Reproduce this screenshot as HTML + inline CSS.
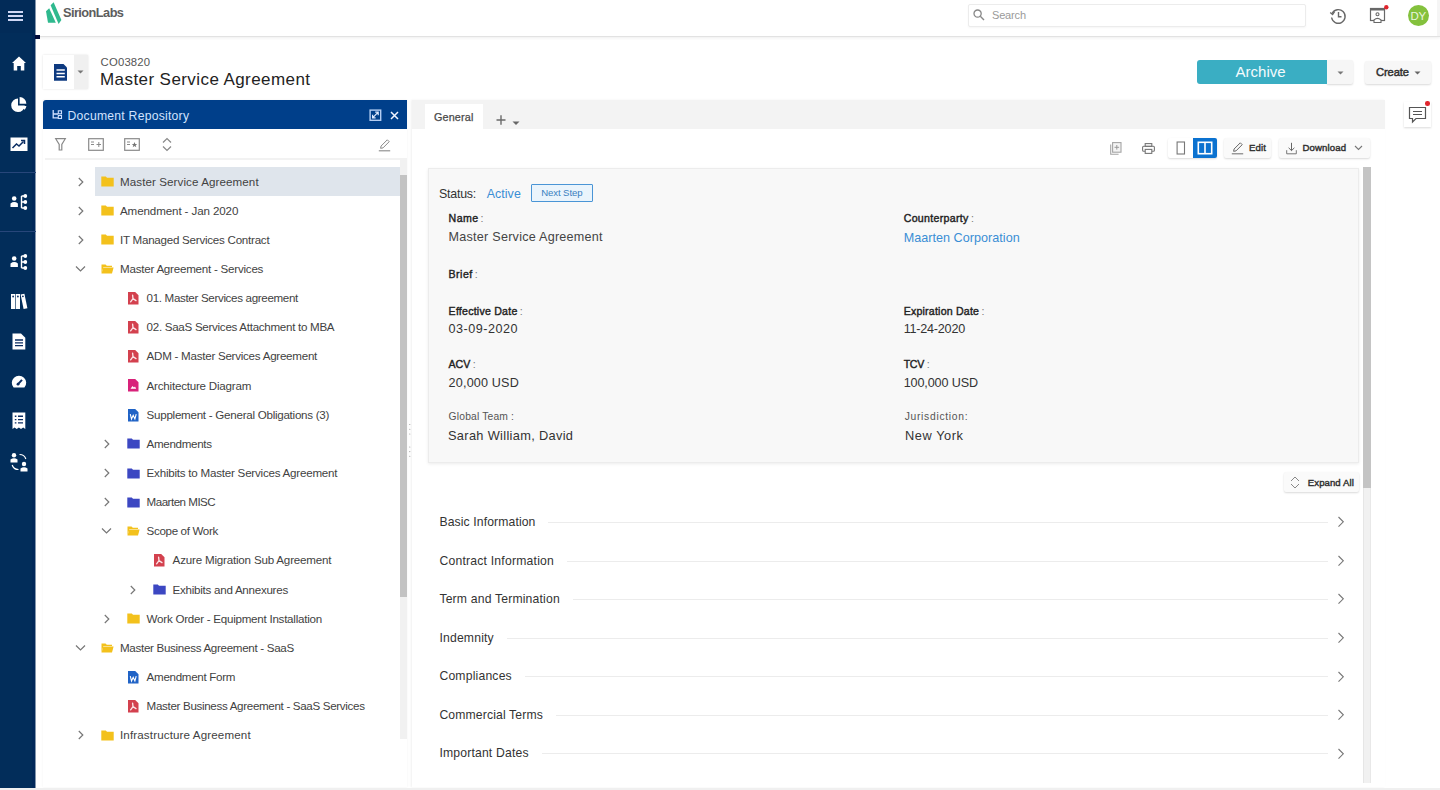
<!DOCTYPE html>
<html><head><meta charset="utf-8"><style>
html,body{margin:0;padding:0;width:1440px;height:790px;overflow:hidden;background:#fff;font-family:"Liberation Sans", sans-serif;}
.t{position:absolute;white-space:nowrap;line-height:1;}
svg{overflow:visible}
</style></head><body>
<div style="position:absolute;left:36px;top:0px;width:1404px;height:36px;background:#fff;border-bottom:1px solid #e2e2e2;box-shadow:0 1px 3px rgba(0,0,0,.07)"></div>
<svg style="position:absolute;left:44px;top:1px" width="20" height="25" viewBox="0 0 20 25"><path d="M2 10.2 L5.2 7.2 L11.8 21.8 L4 21.8 Z" fill="#2fb98e"/><path d="M6.6 4.2 L9.6 1.2 L17.4 19 L14.6 23 Z" fill="#2fb98e"/></svg>
<div class="t" style="left:63.0px;top:6.66px;font-size:12.8px;color:#5d5d5d;font-weight:700;letter-spacing:-0.571px;">SirionLabs</div>
<div style="position:absolute;left:968px;top:4px;width:336px;height:21px;background:#fff;border:1px solid #ececec;border-radius:2px;box-shadow:0 1px 2px rgba(0,0,0,.04)"></div>
<svg style="position:absolute;left:973px;top:9px" width="12" height="12" viewBox="0 0 12 12"><circle cx="4.6" cy="4.6" r="3.6" fill="none" stroke="#888" stroke-width="1.3"/><path d="M7.3 7.3 L11 11" stroke="#888" stroke-width="1.4"/></svg>
<div class="t" style="left:992.0px;top:9.69px;font-size:11px;color:#9a9a9a;font-weight:400;letter-spacing:-0.172px;">Search</div>
<svg style="position:absolute;left:1329px;top:7px" width="18" height="18" viewBox="0 0 18 18"><path d="M3.2 6.5 A6.8 6.8 0 1 1 2.6 10.5" fill="none" stroke="#686868" stroke-width="1.4"/><path d="M1.2 5.5 L3.6 7.6 L5.6 4.6" fill="none" stroke="#686868" stroke-width="1.3"/><path d="M9.5 5 V9.8 H12.5" fill="none" stroke="#686868" stroke-width="1.4"/></svg>
<svg style="position:absolute;left:1368px;top:5px" width="22" height="20" viewBox="0 0 22 20"><rect x="2.5" y="3.5" width="14" height="12" fill="none" stroke="#686868" stroke-width="1.2"/><rect x="2.5" y="3.5" width="14" height="2" fill="#686868"/><circle cx="9.5" cy="9.3" r="1.5" fill="none" stroke="#686868" stroke-width="1.1"/><path d="M6 17.5 V15 Q9.5 11.8 13 15 V17.5 Z" fill="#fff" stroke="#686868" stroke-width="1.1"/><circle cx="18.3" cy="2.3" r="2.2" fill="#e0242c"/></svg>
<div style="position:absolute;left:1437px;top:0px;width:3px;height:36px;background:#f5f5f5"></div>
<div style="position:absolute;left:1407.5px;top:5.3px;width:21px;height:21px;background:#84c13d;border-radius:50%"></div>
<div class="t" style="left:1410.5px;top:10.77px;font-size:11.5px;color:#e9f5dd;font-weight:400;letter-spacing:-0.3px;">DY</div>
<div style="position:absolute;left:0px;top:0px;width:35px;height:790px;background:#022d5a"></div>
<div style="position:absolute;left:32px;top:0px;width:3px;height:790px;background:#01285a"></div>
<div style="position:absolute;left:35px;top:0px;width:1px;height:790px;background:#8496ad"></div>
<div style="position:absolute;left:0px;top:0px;width:35px;height:33px;background:#022b58"></div>
<div style="position:absolute;left:35px;top:35px;width:5px;height:3.5px;background:#030c3a"></div>
<div style="position:absolute;left:8px;top:11px;width:15px;height:2px;background:#cfd7f5;box-shadow:0 4px 0 #cfd7f5,0 8px 0 #cfd7f5"></div>
<div style="position:absolute;left:0px;top:172px;width:36px;height:1px;background:#27467a"></div>
<div style="position:absolute;left:0px;top:231px;width:36px;height:1px;background:#27467a"></div>
<svg style="position:absolute;left:11px;top:55px" width="16" height="17" viewBox="0 0 16 17"><path d="M8 1.5 L15 8 H13.3 V15.5 H9.8 V11 H6.2 V15.5 H2.7 V8 H1 Z" fill="#fff"/></svg>
<svg style="position:absolute;left:10px;top:96px" width="18" height="17" viewBox="0 0 18 17"><path d="M8 2.5 A6.8 6.8 0 1 0 14.8 9.5 H8 Z" fill="#fff"/><path d="M9.6 1 A6.9 6.9 0 0 1 16.4 7.8 H9.6 Z" fill="#fff"/><path d="M10.2 9.9 H16.4 A7 7 0 0 1 14.6 13.8 Z" fill="#fff"/></svg>
<svg style="position:absolute;left:10px;top:137px" width="18" height="15" viewBox="0 0 18 15"><rect x="0.5" y="0.5" width="17" height="13.5" fill="#fff"/><path d="M2.5 11 L6.5 7 L9 9 L13.5 4.5" fill="none" stroke="#0b2d62" stroke-width="1.5"/><path d="M11 3.6 H14.5 V7" fill="none" stroke="#0b2d62" stroke-width="1.5"/></svg>
<svg style="position:absolute;left:10px;top:193px" width="18" height="18" viewBox="0 0 18 18"><circle cx="4.2" cy="5.5" r="2.3" fill="#fff"/><path d="M0.5 14 V10.5 Q4.2 7.6 7.9 10.5 V14 Z" fill="#fff"/><path d="M11.5 3 V15 M11.5 3 H14.5 M11.5 9 H14.5 M11.5 15 H14.5" fill="none" stroke="#fff" stroke-width="1.4"/><circle cx="15.3" cy="3" r="1.9" fill="#fff"/><circle cx="15.3" cy="9" r="1.9" fill="#fff"/><circle cx="15.3" cy="15" r="1.9" fill="#fff"/></svg>
<svg style="position:absolute;left:10px;top:253px" width="18" height="18" viewBox="0 0 18 18"><circle cx="4.2" cy="5.5" r="2.3" fill="#fff"/><path d="M0.5 14 V10.5 Q4.2 7.6 7.9 10.5 V14 Z" fill="#fff"/><path d="M11.5 3 V15 M11.5 3 H14.5 M11.5 9 H14.5 M11.5 15 H14.5" fill="none" stroke="#fff" stroke-width="1.4"/><circle cx="15.3" cy="3" r="1.9" fill="#fff"/><circle cx="15.3" cy="9" r="1.9" fill="#fff"/><circle cx="15.3" cy="15" r="1.9" fill="#fff"/></svg>
<svg style="position:absolute;left:10px;top:293px" width="18" height="17" viewBox="0 0 18 17"><rect x="1" y="1" width="4.2" height="15" fill="#fff"/><rect x="5.8" y="1" width="4.2" height="15" fill="#fff"/><path d="M10.6 1.6 L14.4 0.8 L17.4 15.2 L13.6 16 Z" fill="#fff"/><circle cx="3.1" cy="3.5" r="0.9" fill="#0b2d62"/><circle cx="7.9" cy="3.5" r="0.9" fill="#0b2d62"/><circle cx="12.9" cy="3.3" r="0.9" fill="#0b2d62"/></svg>
<svg style="position:absolute;left:12px;top:333px" width="14" height="17" viewBox="0 0 14 17"><path d="M0.5 0.5 H9 L13.3 4.8 V16.5 H0.5 Z" fill="#fff"/><path d="M3 7 H11 M3 9.8 H11 M3 12.6 H11" stroke="#0b2d62" stroke-width="1.3"/></svg>
<svg style="position:absolute;left:11px;top:374px" width="16" height="15" viewBox="0 0 16 15"><path d="M2.6 13.6 A7.2 7.2 0 1 1 13.4 13.6 Z" fill="#fff"/><path d="M6.8 10.4 L11 5.8" stroke="#0b2d62" stroke-width="2"/><circle cx="7" cy="10.2" r="1.4" fill="#0b2d62"/></svg>
<svg style="position:absolute;left:12px;top:412px" width="14" height="18" viewBox="0 0 14 18"><path d="M0.5 0.5 H13.3 V17 L11.2 15.6 L9 17 L6.9 15.6 L4.7 17 L2.6 15.6 L0.5 17 Z" fill="#fff"/><path d="M2.8 4.3 H4.4 M6 4.3 H11 M2.8 7.6 H4.4 M6 7.6 H11 M2.8 10.9 H4.4 M6 10.9 H11" stroke="#0b2d62" stroke-width="1.4"/></svg>
<svg style="position:absolute;left:10px;top:452px" width="18" height="20" viewBox="0 0 18 20"><circle cx="4" cy="3.2" r="2.2" fill="#fff"/><path d="M0.5 10.5 V7.6 Q4 5 7.5 7.6 V10.5 Z" fill="#fff"/><circle cx="14" cy="12" r="2.2" fill="#fff"/><path d="M10.5 19.5 V16.6 Q14 14 17.5 16.6 V19.5 Z" fill="#fff"/><path d="M9.5 2.5 Q14.5 2.5 15.8 7" fill="none" stroke="#fff" stroke-width="1.2"/><path d="M8.5 17.5 Q3.5 17.5 2.2 13" fill="none" stroke="#fff" stroke-width="1.2"/></svg>
<div style="position:absolute;left:43px;top:55px;width:45px;height:34px;background:#f0f0f0;box-shadow:0 0 2px rgba(0,0,0,.12)"></div>
<div style="position:absolute;left:43px;top:55px;width:31px;height:34px;background:#fff"></div>
<svg style="position:absolute;left:54px;top:64px" width="14" height="17" viewBox="0 0 14 17"><path d="M0 0 H9.5 L13 3.5 V16.8 H0 Z" fill="#0e3a80"/><path d="M2.5 6 H10.8 M2.5 9.4 H10.8 M2.5 12.8 H10.8" stroke="#fff" stroke-width="1.5"/></svg>
<svg style="position:absolute;left:77px;top:70px" width="7" height="4" viewBox="0 0 7 4"><path d="M0.5 0.5 H6.5 L3.5 3.5 Z" fill="#777"/></svg>
<div class="t" style="left:100.6px;top:57.23px;font-size:11.3px;color:#555;font-weight:400;letter-spacing:0.19px;">CO03820</div>
<div class="t" style="left:100.0px;top:71.01px;font-size:17px;color:#222;font-weight:400;letter-spacing:0.421px;">Master Service Agreement</div>
<div style="position:absolute;left:1327px;top:60px;width:26px;height:24px;background:#f6f6f6;box-shadow:0 1px 2px rgba(0,0,0,.15);border-radius:0 2px 2px 0"></div>
<div style="position:absolute;left:1197px;top:60px;width:130px;height:24px;background:#3aaec3;border-radius:3px 0 0 3px"></div>
<div class="t" style="left:1235.6px;top:64.10px;font-size:15px;color:#f4fbfd;font-weight:400;letter-spacing:-0.005px;">Archive</div>
<svg style="position:absolute;left:1337px;top:71px" width="7" height="4" viewBox="0 0 7 4"><path d="M0.5 0.5 H6.5 L3.5 3.5 Z" fill="#777"/></svg>
<div style="position:absolute;left:1364.5px;top:61px;width:66.5px;height:22.5px;background:#f7f7f7;box-shadow:0 1px 2px rgba(0,0,0,.15);border-radius:2px"></div>
<div class="t" style="left:1376.0px;top:66.72px;font-size:11.2px;color:#2e2e2e;font-weight:400;letter-spacing:-0.119px;-webkit-text-stroke:0.45px #2e2e2e">Create</div>
<svg style="position:absolute;left:1414px;top:71px" width="7" height="4" viewBox="0 0 7 4"><path d="M0.5 0.5 H6.5 L3.5 3.5 Z" fill="#666"/></svg>
<div style="position:absolute;left:43px;top:100px;width:364px;height:687px;background:#fff;box-shadow:0 0 2px rgba(0,0,0,.06)"></div>
<div style="position:absolute;left:43px;top:100px;width:364px;height:28.5px;background:#003f8a;border-radius:3px 0 0 0"></div>
<svg style="position:absolute;left:52px;top:109px" width="11" height="11" viewBox="0 0 11 11"><path d="M1.2 1 V8.8 H6 M1.2 5 H6" fill="none" stroke="#cfe0ff" stroke-width="1.3"/><rect x="6.3" y="1.8" width="3.2" height="3" fill="none" stroke="#cfe0ff" stroke-width="1.1"/><rect x="6.3" y="6.5" width="3.2" height="3" fill="none" stroke="#cfe0ff" stroke-width="1.1"/></svg>
<div class="t" style="left:67.5px;top:109.97px;font-size:12.2px;color:#d2e3ff;font-weight:400;letter-spacing:0.24px;">Document Repository</div>
<svg style="position:absolute;left:368.5px;top:109px" width="13" height="13" viewBox="0 0 13 13"><rect x="1.1" y="1.1" width="10.6" height="10.2" fill="none" stroke="#b4cdf2" stroke-width="1.4"/><path d="M3.6 8.8 L9.2 3.2 M6.2 3.2 H9.2 V6.2 M3.6 5.8 V8.8 H6.6" fill="none" stroke="#dfeaff" stroke-width="1.2"/></svg>
<svg style="position:absolute;left:390px;top:111px" width="9" height="9" viewBox="0 0 9 9"><path d="M1 1 L8 8 M8 1 L1 8" stroke="#f0f4ff" stroke-width="1.5"/></svg>
<div style="position:absolute;left:45px;top:158px;width:362px;height:2px;background:#f2f2f2"></div>
<svg style="position:absolute;left:55px;top:138px" width="11" height="13" viewBox="0 0 11 13"><path d="M0.7 0.7 H10.3 L6.8 6.5 V12 H4.2 V6.5 Z" fill="none" stroke="#888" stroke-width="1.2"/></svg>
<svg style="position:absolute;left:88px;top:138px" width="16" height="13" viewBox="0 0 16 13"><rect x="0.7" y="0.7" width="14.6" height="11.6" fill="none" stroke="#8a8a8a" stroke-width="1.2"/><path d="M3 4 H6 M3 6.5 H6 M8.5 6.5 H13 M10.8 4 V9" stroke="#8a8a8a" stroke-width="1"/></svg>
<svg style="position:absolute;left:124px;top:138px" width="16" height="13" viewBox="0 0 16 13"><rect x="0.7" y="0.7" width="14.6" height="11.6" fill="none" stroke="#8a8a8a" stroke-width="1.2"/><path d="M3 4 H6 M3 6.5 H6" stroke="#8a8a8a" stroke-width="1"/><path d="M10.5 4 L11.3 6 L13.2 6 L11.7 7.3 L12.3 9.3 L10.5 8.1 L8.7 9.3 L9.3 7.3 L7.8 6 L9.7 6 Z" fill="#777"/></svg>
<svg style="position:absolute;left:162px;top:137px" width="10" height="15" viewBox="0 0 10 15"><path d="M1 5.5 L5 1.5 L9 5.5 M1 9.5 L5 13.5 L9 9.5" fill="none" stroke="#888" stroke-width="1.2"/></svg>
<svg style="position:absolute;left:377.5px;top:139px" width="13" height="13" viewBox="0 0 13 13"><path d="M2.6 9.3 L3.1 7 L9.3 0.8 L11.2 2.7 L5 8.9 Z" fill="none" stroke="#8a8a8a" stroke-width="1"/><path d="M0.8 11.8 H12.2" stroke="#8a8a8a" stroke-width="1.1"/></svg>
<div style="position:absolute;left:94.5px;top:167px;width:305px;height:29px;background:#dfe5ec"></div>
<svg style="position:absolute;left:77px;top:176.8px" width="8" height="10" viewBox="0 0 8 10"><path d="M1.8 1 L5.8 5 L1.8 9" fill="none" stroke="#777" stroke-width="1.2"/></svg>
<svg style="position:absolute;left:101px;top:176.2px" width="13" height="11" viewBox="0 0 13 11"><path d="M0.3 0.5 H4.8 L6 1.8 H12.7 V10.5 H0.3 Z" fill="#f3c11c"/></svg>
<div class="t" style="left:120.0px;top:175.68px;font-size:11.6px;color:#424242;font-weight:400;letter-spacing:0.087px;">Master Service Agreement</div>
<svg style="position:absolute;left:77px;top:205.93px" width="8" height="10" viewBox="0 0 8 10"><path d="M1.8 1 L5.8 5 L1.8 9" fill="none" stroke="#777" stroke-width="1.2"/></svg>
<svg style="position:absolute;left:101px;top:205.32999999999998px" width="13" height="11" viewBox="0 0 13 11"><path d="M0.3 0.5 H4.8 L6 1.8 H12.7 V10.5 H0.3 Z" fill="#f3c11c"/></svg>
<div class="t" style="left:120.0px;top:204.81px;font-size:11.6px;color:#424242;font-weight:400;letter-spacing:-0.112px;">Amendment - Jan 2020</div>
<svg style="position:absolute;left:77px;top:235.06px" width="8" height="10" viewBox="0 0 8 10"><path d="M1.8 1 L5.8 5 L1.8 9" fill="none" stroke="#777" stroke-width="1.2"/></svg>
<svg style="position:absolute;left:101px;top:234.45999999999998px" width="13" height="11" viewBox="0 0 13 11"><path d="M0.3 0.5 H4.8 L6 1.8 H12.7 V10.5 H0.3 Z" fill="#f3c11c"/></svg>
<div class="t" style="left:120.0px;top:233.94px;font-size:11.6px;color:#424242;font-weight:400;letter-spacing:-0.251px;">IT Managed Services Contract</div>
<svg style="position:absolute;left:75px;top:265.19px" width="11" height="8" viewBox="0 0 11 8"><path d="M1 1.5 L5.5 6 L10 1.5" fill="none" stroke="#777" stroke-width="1.2"/></svg>
<svg style="position:absolute;left:101px;top:263.89px" width="13" height="10" viewBox="0 0 13 10"><path d="M0.5 0.5 H4.5 L5.8 1.8 H11 V3 H2.5 L0.5 9.5 Z" fill="#f3c11c"/><path d="M0.5 9.5 L2.3 3.6 H12.6 L11 9.5 Z" fill="#f3c11c"/></svg>
<div class="t" style="left:120.0px;top:263.07px;font-size:11.6px;color:#424242;font-weight:400;letter-spacing:-0.234px;">Master Agreement - Services</div>
<svg style="position:absolute;left:128px;top:292.02px" width="11" height="13" viewBox="0 0 11 13"><path d="M0 0 H7.2 L10.5 3.3 V12.5 H0 Z" fill="#d3414e"/><path d="M4.6 3.2 L5 6.6 L8 8.6 M5 6.6 L2.6 9.8" fill="none" stroke="#fbe3e6" stroke-width="1.35" stroke-linecap="round"/></svg>
<div class="t" style="left:146.6px;top:292.20px;font-size:11.6px;color:#424242;font-weight:400;letter-spacing:-0.336px;">01. Master Services agreement</div>
<svg style="position:absolute;left:128px;top:321.15px" width="11" height="13" viewBox="0 0 11 13"><path d="M0 0 H7.2 L10.5 3.3 V12.5 H0 Z" fill="#d3414e"/><path d="M4.6 3.2 L5 6.6 L8 8.6 M5 6.6 L2.6 9.8" fill="none" stroke="#fbe3e6" stroke-width="1.35" stroke-linecap="round"/></svg>
<div class="t" style="left:146.6px;top:321.33px;font-size:11.6px;color:#424242;font-weight:400;letter-spacing:-0.29px;">02. SaaS Services Attachment to MBA</div>
<svg style="position:absolute;left:128px;top:350.28px" width="11" height="13" viewBox="0 0 11 13"><path d="M0 0 H7.2 L10.5 3.3 V12.5 H0 Z" fill="#d3414e"/><path d="M4.6 3.2 L5 6.6 L8 8.6 M5 6.6 L2.6 9.8" fill="none" stroke="#fbe3e6" stroke-width="1.35" stroke-linecap="round"/></svg>
<div class="t" style="left:146.6px;top:350.46px;font-size:11.6px;color:#424242;font-weight:400;letter-spacing:-0.259px;">ADM - Master Services Agreement</div>
<svg style="position:absolute;left:128px;top:379.40999999999997px" width="11" height="13" viewBox="0 0 11 13"><path d="M0 0 H7.2 L10.5 3.3 V12.5 H0 Z" fill="#d8227a"/><path d="M2.5 9.8 L4.5 7 L6 8.5 L7 7.5 L8.2 9.8 Z" fill="#fff"/></svg>
<div class="t" style="left:146.6px;top:379.59px;font-size:11.6px;color:#424242;font-weight:400;letter-spacing:-0.221px;">Architecture Diagram</div>
<svg style="position:absolute;left:128px;top:408.53999999999996px" width="11" height="13" viewBox="0 0 11 13"><path d="M0 0 H7.2 L10.5 3.3 V12.5 H0 Z" fill="#2063c6"/><path d="M2.3 5.2 L3.5 10 L5.2 6.3 L6.9 10 L8.2 5.2" fill="none" stroke="#fff" stroke-width="1.1"/></svg>
<div class="t" style="left:146.6px;top:408.72px;font-size:11.6px;color:#424242;font-weight:400;letter-spacing:-0.264px;">Supplement - General Obligations (3)</div>
<svg style="position:absolute;left:103px;top:438.97px" width="8" height="10" viewBox="0 0 8 10"><path d="M1.8 1 L5.8 5 L1.8 9" fill="none" stroke="#777" stroke-width="1.2"/></svg>
<svg style="position:absolute;left:127px;top:438.37px" width="13" height="11" viewBox="0 0 13 11"><path d="M0.3 0.5 H4.8 L6 1.8 H12.7 V10.5 H0.3 Z" fill="#3c47c2"/></svg>
<div class="t" style="left:146.6px;top:437.85px;font-size:11.6px;color:#424242;font-weight:400;letter-spacing:-0.324px;">Amendments</div>
<svg style="position:absolute;left:103px;top:468.1px" width="8" height="10" viewBox="0 0 8 10"><path d="M1.8 1 L5.8 5 L1.8 9" fill="none" stroke="#777" stroke-width="1.2"/></svg>
<svg style="position:absolute;left:127px;top:467.5px" width="13" height="11" viewBox="0 0 13 11"><path d="M0.3 0.5 H4.8 L6 1.8 H12.7 V10.5 H0.3 Z" fill="#3c47c2"/></svg>
<div class="t" style="left:146.6px;top:466.98px;font-size:11.6px;color:#424242;font-weight:400;letter-spacing:-0.228px;">Exhibits to Master Services Agreement</div>
<svg style="position:absolute;left:103px;top:497.23px" width="8" height="10" viewBox="0 0 8 10"><path d="M1.8 1 L5.8 5 L1.8 9" fill="none" stroke="#777" stroke-width="1.2"/></svg>
<svg style="position:absolute;left:127px;top:496.63px" width="13" height="11" viewBox="0 0 13 11"><path d="M0.3 0.5 H4.8 L6 1.8 H12.7 V10.5 H0.3 Z" fill="#3c47c2"/></svg>
<div class="t" style="left:146.6px;top:496.11px;font-size:11.6px;color:#424242;font-weight:400;letter-spacing:-0.514px;">Maarten MISC</div>
<svg style="position:absolute;left:101px;top:527.3599999999999px" width="11" height="8" viewBox="0 0 11 8"><path d="M1 1.5 L5.5 6 L10 1.5" fill="none" stroke="#777" stroke-width="1.2"/></svg>
<svg style="position:absolute;left:127px;top:526.06px" width="13" height="10" viewBox="0 0 13 10"><path d="M0.5 0.5 H4.5 L5.8 1.8 H11 V3 H2.5 L0.5 9.5 Z" fill="#f3c11c"/><path d="M0.5 9.5 L2.3 3.6 H12.6 L11 9.5 Z" fill="#f3c11c"/></svg>
<div class="t" style="left:146.6px;top:525.24px;font-size:11.6px;color:#424242;font-weight:400;letter-spacing:-0.344px;">Scope of Work</div>
<svg style="position:absolute;left:154px;top:554.19px" width="11" height="13" viewBox="0 0 11 13"><path d="M0 0 H7.2 L10.5 3.3 V12.5 H0 Z" fill="#d3414e"/><path d="M4.6 3.2 L5 6.6 L8 8.6 M5 6.6 L2.6 9.8" fill="none" stroke="#fbe3e6" stroke-width="1.35" stroke-linecap="round"/></svg>
<div class="t" style="left:172.6px;top:554.37px;font-size:11.6px;color:#424242;font-weight:400;letter-spacing:-0.194px;">Azure Migration Sub Agreement</div>
<svg style="position:absolute;left:129px;top:584.6199999999999px" width="8" height="10" viewBox="0 0 8 10"><path d="M1.8 1 L5.8 5 L1.8 9" fill="none" stroke="#777" stroke-width="1.2"/></svg>
<svg style="position:absolute;left:153px;top:584.02px" width="13" height="11" viewBox="0 0 13 11"><path d="M0.3 0.5 H4.8 L6 1.8 H12.7 V10.5 H0.3 Z" fill="#3c47c2"/></svg>
<div class="t" style="left:172.6px;top:583.50px;font-size:11.6px;color:#424242;font-weight:400;letter-spacing:-0.265px;">Exhibits and Annexures</div>
<svg style="position:absolute;left:103px;top:613.75px" width="8" height="10" viewBox="0 0 8 10"><path d="M1.8 1 L5.8 5 L1.8 9" fill="none" stroke="#777" stroke-width="1.2"/></svg>
<svg style="position:absolute;left:127px;top:613.1500000000001px" width="13" height="11" viewBox="0 0 13 11"><path d="M0.3 0.5 H4.8 L6 1.8 H12.7 V10.5 H0.3 Z" fill="#f3c11c"/></svg>
<div class="t" style="left:146.6px;top:612.63px;font-size:11.6px;color:#424242;font-weight:400;letter-spacing:-0.252px;">Work Order - Equipment Installation</div>
<svg style="position:absolute;left:75px;top:643.8799999999999px" width="11" height="8" viewBox="0 0 11 8"><path d="M1 1.5 L5.5 6 L10 1.5" fill="none" stroke="#777" stroke-width="1.2"/></svg>
<svg style="position:absolute;left:101px;top:642.5799999999999px" width="13" height="10" viewBox="0 0 13 10"><path d="M0.5 0.5 H4.5 L5.8 1.8 H11 V3 H2.5 L0.5 9.5 Z" fill="#f3c11c"/><path d="M0.5 9.5 L2.3 3.6 H12.6 L11 9.5 Z" fill="#f3c11c"/></svg>
<div class="t" style="left:120.0px;top:641.76px;font-size:11.6px;color:#424242;font-weight:400;letter-spacing:-0.305px;">Master Business Agreement - SaaS</div>
<svg style="position:absolute;left:128px;top:670.71px" width="11" height="13" viewBox="0 0 11 13"><path d="M0 0 H7.2 L10.5 3.3 V12.5 H0 Z" fill="#2063c6"/><path d="M2.3 5.2 L3.5 10 L5.2 6.3 L6.9 10 L8.2 5.2" fill="none" stroke="#fff" stroke-width="1.1"/></svg>
<div class="t" style="left:146.6px;top:670.89px;font-size:11.6px;color:#424242;font-weight:400;letter-spacing:-0.299px;">Amendment Form</div>
<svg style="position:absolute;left:128px;top:699.84px" width="11" height="13" viewBox="0 0 11 13"><path d="M0 0 H7.2 L10.5 3.3 V12.5 H0 Z" fill="#d3414e"/><path d="M4.6 3.2 L5 6.6 L8 8.6 M5 6.6 L2.6 9.8" fill="none" stroke="#fbe3e6" stroke-width="1.35" stroke-linecap="round"/></svg>
<div class="t" style="left:146.6px;top:700.02px;font-size:11.6px;color:#424242;font-weight:400;letter-spacing:-0.324px;">Master Business Agreement - SaaS Services</div>
<svg style="position:absolute;left:77px;top:730.27px" width="8" height="10" viewBox="0 0 8 10"><path d="M1.8 1 L5.8 5 L1.8 9" fill="none" stroke="#777" stroke-width="1.2"/></svg>
<svg style="position:absolute;left:101px;top:729.6700000000001px" width="13" height="11" viewBox="0 0 13 11"><path d="M0.3 0.5 H4.8 L6 1.8 H12.7 V10.5 H0.3 Z" fill="#f3c11c"/></svg>
<div class="t" style="left:120.0px;top:729.15px;font-size:11.6px;color:#424242;font-weight:400;letter-spacing:0.131px;">Infrastructure Agreement</div>
<div style="position:absolute;left:399.5px;top:160px;width:7.5px;height:579px;background:#f1f1f1"></div>
<div style="position:absolute;left:399.5px;top:175px;width:7.5px;height:422px;background:#c3c3c3"></div>
<svg style="position:absolute;left:408px;top:422px" width="4" height="38" viewBox="0 0 4 38"><g fill="#999"><circle cx="1.8" cy="2.5" r="0.55"/><circle cx="1.8" cy="7.3" r="0.55"/><circle cx="1.8" cy="12" r="0.55"/><circle cx="1.8" cy="25" r="0.55"/><circle cx="1.8" cy="29.6" r="0.55"/><circle cx="1.8" cy="34.2" r="0.55"/></g></svg>
<div style="position:absolute;left:412px;top:100px;width:973px;height:687px;background:#fff;box-shadow:-1px 0 2px rgba(0,0,0,.06)"></div>
<div style="position:absolute;left:412px;top:100px;width:973px;height:29px;background:#f3f3f3"></div>
<div style="position:absolute;left:425px;top:104px;width:57.5px;height:25px;background:#fff"></div>
<div class="t" style="left:434.0px;top:111.66px;font-size:10.8px;color:#4a4a4a;font-weight:400;letter-spacing:0.146px;-webkit-text-stroke:0.25px #4a4a4a">General</div>
<svg style="position:absolute;left:495px;top:114px" width="12" height="12" viewBox="0 0 12 12"><path d="M6 1.2 V10.8 M1.5 6 H10.5" stroke="#6a6a6a" stroke-width="1.4"/></svg>
<svg style="position:absolute;left:512px;top:121px" width="8" height="5" viewBox="0 0 8 5"><path d="M0.5 0.5 H7.5 L4 4 Z" fill="#666"/></svg>
<svg style="position:absolute;left:1110px;top:142px" width="12" height="13" viewBox="0 0 12 13"><rect x="2.6" y="0.6" width="8.4" height="9.6" fill="#f4f4f4" stroke="#a5a5a5" stroke-width="1.1"/><path d="M0.7 2.6 V12.2 H8.6" fill="none" stroke="#a5a5a5" stroke-width="1.1"/><path d="M6.8 3 V7.6 M4.5 5.3 H9.1" stroke="#999" stroke-width="1"/></svg>
<svg style="position:absolute;left:1142px;top:142.5px" width="13" height="11" viewBox="0 0 13 11"><rect x="3.2" y="0.6" width="6.6" height="2.8" fill="none" stroke="#777" stroke-width="1.1"/><rect x="0.6" y="3.2" width="11.8" height="5" rx="1" fill="none" stroke="#777" stroke-width="1.1"/><rect x="3.2" y="6.4" width="6.6" height="4" fill="#fff" stroke="#777" stroke-width="1.1"/></svg>
<div style="position:absolute;left:1167.5px;top:138px;width:49.5px;height:20px;background:#fff;box-shadow:0 1px 2px rgba(0,0,0,.15);border-radius:2px"></div>
<div style="position:absolute;left:1192.5px;top:138px;width:24.5px;height:20px;background:#0b72d0;border-radius:0 2px 2px 0"></div>
<svg style="position:absolute;left:1176px;top:141px" width="10" height="14" viewBox="0 0 10 14"><rect x="1.1" y="1" width="7.4" height="12" fill="none" stroke="#777" stroke-width="1.1"/></svg>
<svg style="position:absolute;left:1197px;top:141px" width="16" height="14" viewBox="0 0 16 14"><rect x="1.3" y="1.3" width="13.4" height="11.4" fill="none" stroke="#fff" stroke-width="1.6"/><path d="M8 1.3 V12.7" stroke="#fff" stroke-width="1.6"/></svg>
<div style="position:absolute;left:1224px;top:138px;width:47px;height:20px;background:#fafafa;box-shadow:0 1px 2px rgba(0,0,0,.15);border-radius:2px"></div>
<svg style="position:absolute;left:1231px;top:142px" width="13" height="13" viewBox="0 0 13 13"><path d="M2.6 9.3 L3.1 7 L9.3 0.8 L11.2 2.7 L5 8.9 Z" fill="none" stroke="#666" stroke-width="1"/><path d="M0.8 11.8 H12.2" stroke="#777" stroke-width="1.1"/></svg>
<div class="t" style="left:1249.0px;top:143.37px;font-size:9.6px;color:#2e2e2e;font-weight:400;letter-spacing:0.151px;-webkit-text-stroke:0.4px #2e2e2e">Edit</div>
<div style="position:absolute;left:1278.5px;top:138px;width:91.5px;height:20px;background:#fafafa;box-shadow:0 1px 2px rgba(0,0,0,.15);border-radius:2px"></div>
<svg style="position:absolute;left:1285.5px;top:141.5px" width="11" height="13" viewBox="0 0 11 13"><path d="M5.5 0.8 V8.6 M2.6 5.8 L5.5 8.6 L8.4 5.8" fill="none" stroke="#666" stroke-width="1"/><path d="M0.7 8.2 V11.8 H10.3 V8.2" fill="none" stroke="#777" stroke-width="1"/></svg>
<div class="t" style="left:1302.5px;top:143.37px;font-size:9.6px;color:#2e2e2e;font-weight:400;letter-spacing:0.118px;-webkit-text-stroke:0.4px #2e2e2e">Download</div>
<svg style="position:absolute;left:1354px;top:145px" width="9" height="6" viewBox="0 0 9 6"><path d="M1 1 L4.5 4.5 L8 1" fill="none" stroke="#777" stroke-width="1.1"/></svg>
<div style="position:absolute;left:428px;top:168px;width:931px;height:294.5px;background:#f8f8f8;border:1px solid #ececec;box-sizing:border-box;box-shadow:0 1px 3px rgba(0,0,0,.08)"></div>
<div class="t" style="left:439.0px;top:187.70px;font-size:12.4px;color:#333;font-weight:400;letter-spacing:-0.213px;">Status:</div>
<div class="t" style="left:486.7px;top:187.70px;font-size:12.4px;color:#3a8ed5;font-weight:400;letter-spacing:0.07px;">Active</div>
<div style="position:absolute;left:531px;top:184px;width:62px;height:17.5px;background:#eaf4fc;border:1px solid #4a95d6;box-sizing:border-box;border-radius:1px"></div>
<div class="t" style="left:541.3px;top:187.87px;font-size:9.6px;color:#3a7fc0;font-weight:400;letter-spacing:-0.118px;">Next Step</div>
<div class="t" style="left:448.6px;top:213.23px;font-size:10.6px;color:#222;font-weight:400;letter-spacing:0.411px;-webkit-text-stroke:0.4px #222">Name</div><!--colon--><div class="t" style="left:480.6px;top:213.23px;font-size:10.6px;color:#777;font-weight:400;letter-spacing:0px;">:</div>
<div class="t" style="left:448.6px;top:231.03px;font-size:12.6px;color:#444;font-weight:400;letter-spacing:0.244px;">Master Service Agreement</div>
<div class="t" style="left:903.7px;top:213.23px;font-size:10.6px;color:#222;font-weight:400;letter-spacing:0.314px;-webkit-text-stroke:0.4px #222">Counterparty</div><!--colon--><div class="t" style="left:970.9px;top:213.23px;font-size:10.6px;color:#777;font-weight:400;letter-spacing:0px;">:</div>
<div class="t" style="left:903.7px;top:232.33px;font-size:12.6px;color:#3a8ed5;font-weight:400;letter-spacing:0.027px;">Maarten Corporation</div>
<div class="t" style="left:448.6px;top:269.03px;font-size:10.6px;color:#222;font-weight:400;letter-spacing:0.451px;-webkit-text-stroke:0.4px #222">Brief</div><!--colon--><div class="t" style="left:474.7px;top:269.03px;font-size:10.6px;color:#777;font-weight:400;letter-spacing:0px;">:</div>
<div class="t" style="left:448.6px;top:305.93px;font-size:10.6px;color:#222;font-weight:400;letter-spacing:0.226px;-webkit-text-stroke:0.4px #222">Effective Date</div><!--colon--><div class="t" style="left:519.8px;top:305.93px;font-size:10.6px;color:#777;font-weight:400;letter-spacing:0px;">:</div>
<div class="t" style="left:448.6px;top:323.23px;font-size:12.6px;color:#333;font-weight:400;letter-spacing:0.509px;">03-09-2020</div>
<div class="t" style="left:903.7px;top:306.03px;font-size:10.6px;color:#222;font-weight:400;letter-spacing:0.204px;-webkit-text-stroke:0.4px #222">Expiration Date</div><!--colon--><div class="t" style="left:981.5px;top:306.03px;font-size:10.6px;color:#777;font-weight:400;letter-spacing:0px;">:</div>
<div class="t" style="left:903.7px;top:323.03px;font-size:12.6px;color:#333;font-weight:400;letter-spacing:-0.222px;">11-24-2020</div>
<div class="t" style="left:448.6px;top:359.03px;font-size:10.6px;color:#222;font-weight:400;letter-spacing:-0.048px;-webkit-text-stroke:0.4px #222">ACV</div><!--colon--><div class="t" style="left:472.8px;top:359.03px;font-size:10.6px;color:#777;font-weight:400;letter-spacing:0px;">:</div>
<div class="t" style="left:448.6px;top:376.93px;font-size:12.6px;color:#333;font-weight:400;letter-spacing:0.177px;">20,000 USD</div>
<div class="t" style="left:903.7px;top:359.03px;font-size:10.6px;color:#222;font-weight:400;letter-spacing:-0.294px;-webkit-text-stroke:0.4px #222">TCV</div><!--colon--><div class="t" style="left:926.8px;top:359.03px;font-size:10.6px;color:#777;font-weight:400;letter-spacing:0px;">:</div>
<div class="t" style="left:903.7px;top:376.93px;font-size:12.6px;color:#333;font-weight:400;letter-spacing:-0.122px;">100,000 USD</div>
<div class="t" style="left:448.6px;top:412.28px;font-size:10.3px;color:#555;font-weight:400;letter-spacing:0.171px;">Global Team :</div>
<div class="t" style="left:448.0px;top:429.76px;font-size:12.8px;color:#333;font-weight:400;letter-spacing:0.328px;">Sarah William, David</div>
<div class="t" style="left:904.7px;top:412.08px;font-size:10.3px;color:#555;font-weight:400;letter-spacing:0.71px;">Jurisdiction:</div>
<div class="t" style="left:905.0px;top:430.16px;font-size:12.8px;color:#333;font-weight:400;letter-spacing:0.562px;">New York</div>
<div style="position:absolute;left:1284px;top:472px;width:75px;height:20px;background:#fafafa;box-shadow:0 1px 2px rgba(0,0,0,.15);border-radius:2px"></div>
<svg style="position:absolute;left:1290px;top:476px" width="10" height="13" viewBox="0 0 10 13"><path d="M1 5 L5 1 L9 5 M1 8 L5 12 L9 8" fill="none" stroke="#888" stroke-width="1"/></svg>
<div class="t" style="left:1307.8px;top:478.37px;font-size:9.6px;color:#2e2e2e;font-weight:400;letter-spacing:0.073px;-webkit-text-stroke:0.4px #2e2e2e">Expand All</div>
<div class="t" style="left:439.4px;top:516.07px;font-size:12.2px;color:#333;font-weight:400;letter-spacing:0.115px;">Basic Information</div>
<div style="position:absolute;left:548.4px;top:522px;width:779.6px;height:1px;background:#ececec"></div>
<svg style="position:absolute;left:1337px;top:516.4px" width="8" height="12" viewBox="0 0 8 12"><path d="M1.5 1 L6.3 5.8 L1.5 10.6" fill="none" stroke="#777" stroke-width="1.1"/></svg>
<div class="t" style="left:439.4px;top:554.60px;font-size:12.2px;color:#333;font-weight:400;letter-spacing:0.215px;">Contract Information</div>
<div style="position:absolute;left:566.9px;top:561px;width:761.1px;height:1px;background:#ececec"></div>
<svg style="position:absolute;left:1337px;top:554.93px" width="8" height="12" viewBox="0 0 8 12"><path d="M1.5 1 L6.3 5.8 L1.5 10.6" fill="none" stroke="#777" stroke-width="1.1"/></svg>
<div class="t" style="left:439.4px;top:593.13px;font-size:12.2px;color:#333;font-weight:400;letter-spacing:0.175px;">Term and Termination</div>
<div style="position:absolute;left:572.6999999999999px;top:599px;width:755.3000000000001px;height:1px;background:#ececec"></div>
<svg style="position:absolute;left:1337px;top:593.46px" width="8" height="12" viewBox="0 0 8 12"><path d="M1.5 1 L6.3 5.8 L1.5 10.6" fill="none" stroke="#777" stroke-width="1.1"/></svg>
<div class="t" style="left:439.4px;top:631.66px;font-size:12.2px;color:#333;font-weight:400;letter-spacing:0.182px;">Indemnity</div>
<div style="position:absolute;left:506.7px;top:638px;width:821.3px;height:1px;background:#ececec"></div>
<svg style="position:absolute;left:1337px;top:631.99px" width="8" height="12" viewBox="0 0 8 12"><path d="M1.5 1 L6.3 5.8 L1.5 10.6" fill="none" stroke="#777" stroke-width="1.1"/></svg>
<div class="t" style="left:439.4px;top:670.19px;font-size:12.2px;color:#333;font-weight:400;letter-spacing:0.185px;">Compliances</div>
<div style="position:absolute;left:524.7px;top:676px;width:803.3px;height:1px;background:#ececec"></div>
<svg style="position:absolute;left:1337px;top:670.52px" width="8" height="12" viewBox="0 0 8 12"><path d="M1.5 1 L6.3 5.8 L1.5 10.6" fill="none" stroke="#777" stroke-width="1.1"/></svg>
<div class="t" style="left:439.4px;top:708.72px;font-size:12.2px;color:#333;font-weight:400;letter-spacing:0.136px;">Commercial Terms</div>
<div style="position:absolute;left:555.8px;top:715px;width:772.2px;height:1px;background:#ececec"></div>
<svg style="position:absolute;left:1337px;top:709.05px" width="8" height="12" viewBox="0 0 8 12"><path d="M1.5 1 L6.3 5.8 L1.5 10.6" fill="none" stroke="#777" stroke-width="1.1"/></svg>
<div class="t" style="left:439.4px;top:747.25px;font-size:12.2px;color:#333;font-weight:400;letter-spacing:0.17px;">Important Dates</div>
<div style="position:absolute;left:541.5px;top:753px;width:786.5px;height:1px;background:#ececec"></div>
<svg style="position:absolute;left:1337px;top:747.5799999999999px" width="8" height="12" viewBox="0 0 8 12"><path d="M1.5 1 L6.3 5.8 L1.5 10.6" fill="none" stroke="#777" stroke-width="1.1"/></svg>
<div style="position:absolute;left:1363px;top:167px;width:8px;height:616px;background:#f1f1f1;box-shadow:inset 1px 0 0 #e6e6e6,inset -1px 0 0 #e8e8e8"></div>
<div style="position:absolute;left:1363px;top:167px;width:8px;height:321px;background:#c4c4c4"></div>
<div style="position:absolute;left:0px;top:788px;width:1440px;height:2px;background:#f0f0f0"></div>
<div style="position:absolute;left:1404px;top:102px;width:27px;height:25px;background:#fff;box-shadow:0 1px 2px rgba(0,0,0,.15)"></div>
<svg style="position:absolute;left:1408px;top:106px" width="20" height="18" viewBox="0 0 20 18"><path d="M1.5 1.5 H17.5 V12.5 H8 L4.5 16 V12.5 H1.5 Z" fill="none" stroke="#555" stroke-width="1.2"/><path d="M5 5.5 H14 M5 8.5 H14" stroke="#555" stroke-width="1.2"/></svg>
<div style="position:absolute;left:1425px;top:101px;width:4.5px;height:4.5px;background:#e0242c;border-radius:50%"></div>
</body></html>
